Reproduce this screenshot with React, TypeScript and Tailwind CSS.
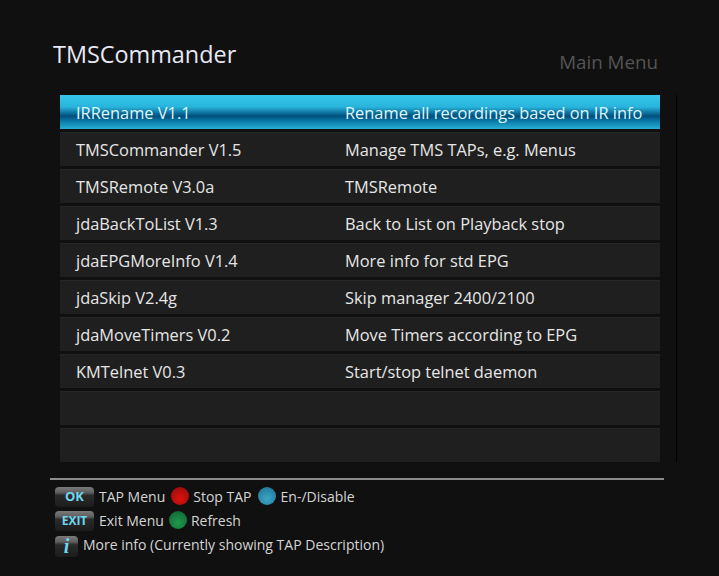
const rows = [
  ['IRRename V1.1', 'Rename all recordings based on IR info'],
  ['TMSCommander V1.5', 'Manage TMS TAPs, e.g. Menus'],
  ['TMSRemote V3.0a', 'TMSRemote'],
  ['jdaBackToList V1.3', 'Back to List on Playback stop'],
  ['jdaEPGMoreInfo V1.4', 'More info for std EPG'],
  ['jdaSkip V2.4g', 'Skip manager 2400/2100'],
  ['jdaMoveTimers V0.2', 'Move Timers according to EPG'],
  ['KMTelnet V0.3', 'Start/stop telnet daemon'],
  ['', ''],
  ['', ''],
];

const KeyCap = ({ label, className }: { label: string; className: string }) => (
  <div className={`flex items-center justify-center rounded-sm bg-[linear-gradient(180deg,#7a7a7a_0%,#5e5e5e_28%,#2a2a2a_42%,#1c1c1c_100%)] font-bold text-[#6fd6f2] ${className}`}>
    {label}
  </div>
);

const Dot = ({ className }: { className: string }) => (
  <span className={`mb-[2px] inline-block size-[18px] shrink-0 rounded-full ${className}`} />
);

export default function App() {
  return (
    <div className="flex h-[576px] w-[719px] flex-col overflow-hidden bg-[#101010] font-['Open_Sans',sans-serif] text-[#e6e6e6]">
      <div className="flex h-[95px] items-start justify-between pl-[53px] pr-[61px]">
        <h1 className="mt-[38px] text-[23.4px] leading-[32px] text-[#e8e8f4]">TMSCommander</h1>
        <span className="mt-[49px] text-[18.75px] leading-[25px] text-[#555555]">Main Menu</span>
      </div>

      <div className="flex items-stretch">
        <div className="ml-[60px] flex w-[600px] flex-col gap-[3px]">
          {rows.map((row, i) => (
            <div
              key={i}
              className={`flex h-[34px] items-center pl-[16px] text-[16.4px] ${
                i === 0
                  ? 'bg-[linear-gradient(180deg,#35c8ea_0%,#28b4dc_35%,#004f7c_62%,#0a7dab_78%,#27afd6_100%)] pt-[2px] text-[#dff6ff]'
                  : 'border-t border-[#262626] bg-[#1f1f1f] pt-[1px]'
              }`}
            >
              <span className="w-[269px]">{row[0]}</span>
              <span>{row[1]}</span>
            </div>
          ))}
        </div>
        <div className="ml-[16px] w-px bg-black" />
      </div>

      <div className="ml-[50px] mt-[16px] h-[2px] w-[614px] bg-[#8c8c8c]" />

      <div className="ml-[55px] mt-[5px] flex flex-col text-[14px] text-[#d4d4d4]">
        <div className="flex h-[24px] items-center">
          <KeyCap label="OK" className="h-[20px] w-[39px] text-[13px]" />
          <span className="mb-[2px] ml-[5px]">TAP Menu</span>
          <Dot className="ml-[6px] bg-[radial-gradient(circle_at_50%_65%,#e01010,#8c0c0c)]" />
          <span className="mb-[2px] ml-[4px]">Stop TAP</span>
          <Dot className="ml-[6px] bg-[radial-gradient(circle_at_50%_65%,#3aa6c8,#1f6f8c)]" />
          <span className="mb-[2px] ml-[5px]">En-/Disable</span>
        </div>
        <div className="flex h-[24px] items-center">
          <KeyCap label="EXIT" className="h-[20px] w-[39px] text-[12px]" />
          <span className="mb-[2px] ml-[5px]">Exit Menu</span>
          <Dot className="ml-[5px] bg-[radial-gradient(circle_at_50%_65%,#1f9a4e,#0f5f2e)]" />
          <span className="mb-[2px] ml-[4px]">Refresh</span>
        </div>
        <div className="flex h-[26px] items-center">
          <KeyCap label="i" className="h-[21px] w-[23px] font-['Liberation_Serif',serif] text-[20px] italic" />
          <span className="mb-[4px] ml-[5px]">More info (Currently showing TAP Description)</span>
        </div>
      </div>
    </div>
  );
}
